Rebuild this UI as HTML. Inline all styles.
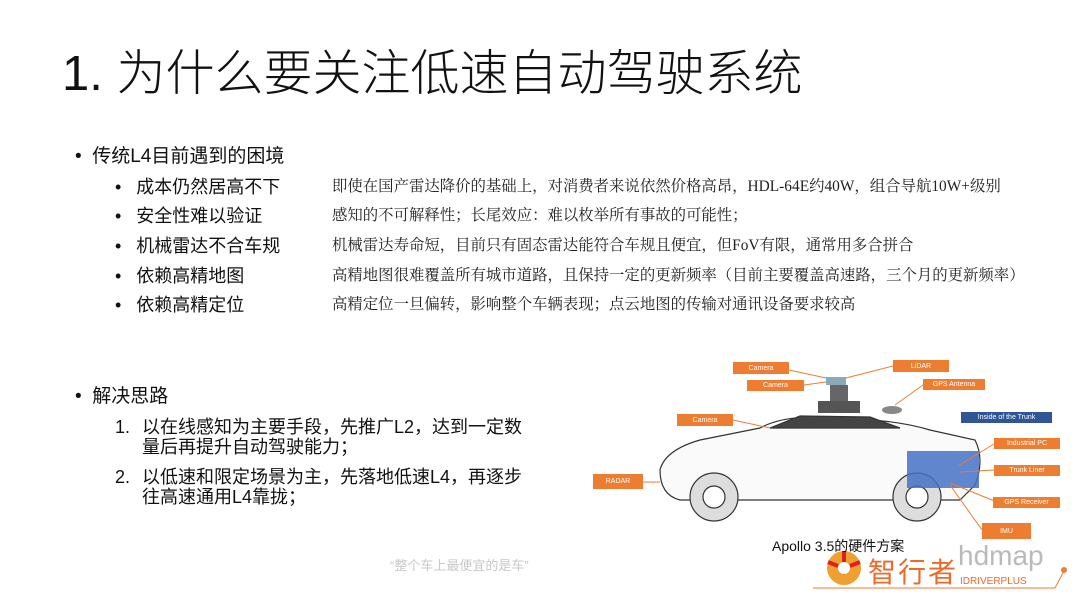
<!DOCTYPE html>
<html><head><meta charset="utf-8"><style>
body{margin:0;width:1080px;height:608px;background:#fff;position:relative;overflow:hidden;font-family:"Liberation Sans","Noto Sans CJK SC",sans-serif;color:#111}
.a{position:absolute;white-space:nowrap}
.t{left:62px;top:44px;font-size:49px;line-height:60px;font-weight:300}
.l1{font-size:19px;line-height:24px}
.l2{font-size:18px;line-height:22px}
.d{font-family:"Liberation Serif","Noto Serif CJK SC",serif;font-size:15.4px;line-height:18px;color:#222}
.n{font-size:18px;line-height:20px}
.o{position:absolute;background:#ed7d31;color:#fff;font-size:7px;text-align:center;display:flex;align-items:center;justify-content:center}
</style></head><body>
<div class="a t">1. 为什么要关注低速自动驾驶系统</div>
<div class="a l1" style="left:75px;top:145px">•&nbsp; 传统L4目前遇到的困境</div>
<div class="a l2" style="left:115px;top:176px">•&nbsp;&nbsp; 成本仍然居高不下</div>
<div class="a l2" style="left:115px;top:205px">•&nbsp;&nbsp; 安全性难以验证</div>
<div class="a l2" style="left:115px;top:235px">•&nbsp;&nbsp; 机械雷达不合车规</div>
<div class="a l2" style="left:115px;top:265px">•&nbsp;&nbsp; 依赖高精地图</div>
<div class="a l2" style="left:115px;top:294px">•&nbsp;&nbsp; 依赖高精定位</div>
<div class="a d" style="left:332px;top:178px">即使在国产雷达降价的基础上，对消费者来说依然价格高昂，HDL-64E约40W，组合导航10W+级别</div>
<div class="a d" style="left:332px;top:207px">感知的不可解释性；长尾效应：难以枚举所有事故的可能性；</div>
<div class="a d" style="left:332px;top:237px">机械雷达寿命短，目前只有固态雷达能符合车规且便宜，但FoV有限，通常用多合拼合</div>
<div class="a d" style="left:332px;top:267px">高精地图很难覆盖所有城市道路，且保持一定的更新频率（目前主要覆盖高速路，三个月的更新频率）</div>
<div class="a d" style="left:332px;top:296px">高精定位一旦偏转，影响整个车辆表现；点云地图的传输对通讯设备要求较高</div>
<div class="a l1" style="left:75px;top:385px">•&nbsp; 解决思路</div>
<div class="a n" style="left:115px;top:417px">1.</div>
<div class="a n" style="left:142px;top:417px">以在线感知为主要手段，先推广L2，达到一定数<br>量后再提升自动驾驶能力；</div>
<div class="a n" style="left:115px;top:467px">2.</div>
<div class="a n" style="left:142px;top:467px">以低速和限定场景为主，先落地低速L4，再逐步<br>往高速通用L4靠拢；</div>
<div class="a" style="left:390px;top:555px;font-size:13px;color:#c8c8c8">“整个车上最便宜的是车”</div>
<svg class="a" style="left:0;top:0" width="1080" height="608">
<g fill="none" stroke="#333" stroke-width="1.2">
<path d="M660 470 Q665 450 700 440 L760 428 Q790 412 840 420 Q890 418 930 430 L975 440 Q985 460 975 485 L960 500 L680 500 Q660 495 660 470Z" fill="#fafafa"/>
<path d="M770 428 L800 416 L870 417 L900 428Z" fill="#444"/>
<circle cx="714" cy="497" r="24" fill="#ddd"/><circle cx="714" cy="497" r="11" fill="#fff"/>
<circle cx="917" cy="497" r="24" fill="#ddd"/><circle cx="917" cy="497" r="11" fill="#fff"/>
</g>
<rect x="818" y="401" width="42" height="12" fill="#555"/>
<rect x="830" y="385" width="18" height="16" fill="#666"/>
<rect x="826" y="377" width="20" height="8" fill="#8ab"/>
<ellipse cx="892" cy="410" rx="10" ry="4" fill="#888"/>
<rect x="907" y="451" width="72" height="37" fill="#4472c4" opacity=".85"/>
<g stroke="#ed7d31" stroke-width="1"><line x1="789" y1="370" x2="826" y2="378"/><line x1="804" y1="385" x2="826" y2="382"/><line x1="893" y1="366" x2="846" y2="378"/><line x1="923" y1="385" x2="895" y2="405"/><line x1="733" y1="420" x2="770" y2="428"/><line x1="643" y1="482" x2="660" y2="482"/><line x1="994" y1="444" x2="958" y2="466"/><line x1="994" y1="470" x2="960" y2="472"/><line x1="997" y1="502" x2="950" y2="483"/><line x1="982" y1="530" x2="950" y2="485"/><line x1="813" y1="588" x2="1055" y2="588"/><line x1="1055" y1="588" x2="1064" y2="571"/></g>
<circle cx="1064" cy="570" r="3" fill="#ed7d31"/>
<circle cx="844" cy="568" r="17" fill="#f0a030"/><circle cx="844" cy="568" r="6" fill="#fff"/>
<path d="M844 551 L844 562 M828 562 L838 566 M860 562 L850 566" stroke="#e02020" stroke-width="4"/>
</svg>
<div class="o" style="left:733px;top:362px;width:56px;height:12px">Camera</div>
<div class="o" style="left:747px;top:380px;width:57px;height:11px">Camera</div>
<div class="o" style="left:893px;top:360px;width:56px;height:12px">LiDAR</div>
<div class="o" style="left:923px;top:379px;width:62px;height:11px">GPS Antenna</div>
<div class="o" style="left:677px;top:414px;width:56px;height:12px">Camera</div>
<div class="o" style="left:961px;top:412px;width:91px;height:11px;background:#2f5597">Inside of the Trunk</div>
<div class="o" style="left:994px;top:438px;width:66px;height:11px">Industrial PC</div>
<div class="o" style="left:994px;top:465px;width:66px;height:11px">Trunk Liner</div>
<div class="o" style="left:993px;top:497px;width:67px;height:11px">GPS Receiver</div>
<div class="o" style="left:593px;top:474px;width:50px;height:15px">RADAR</div>
<div class="o" style="left:982px;top:523px;width:49px;height:16px">IMU</div>
<div class="a" style="left:772px;top:536px;font-size:14px">Apollo 3.5的硬件方案</div>
<div class="a" style="left:958px;top:540px;font-size:28px;color:#aaa;opacity:.8">hdmap</div>
<div class="a" style="left:868px;top:551px;font-size:28px;color:#ee6a2a;letter-spacing:2px">智行者</div>
<div class="a" style="left:960px;top:576px;font-size:10px;color:#ee6a2a">IDRIVERPLUS</div>
</body></html>
